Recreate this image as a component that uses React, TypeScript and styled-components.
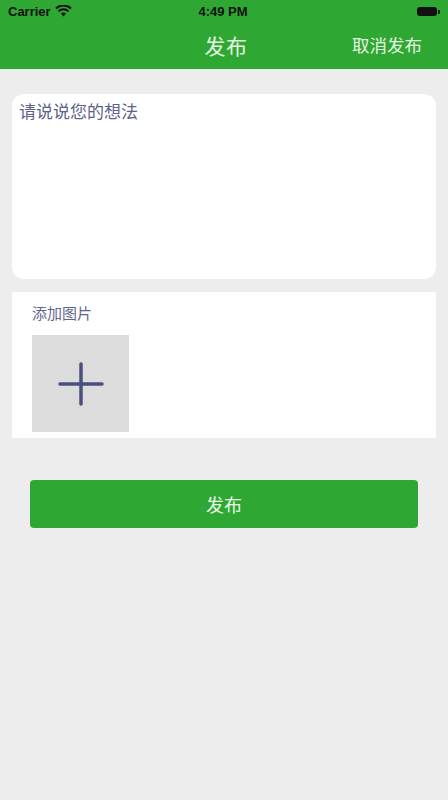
import * as React from 'react'
import styled, { createGlobalStyle } from 'styled-components'

const GREEN = '#2fa733'

const GlobalStyle = createGlobalStyle`
  html, body {
    margin: 0;
    padding: 0;
    background: #ededed;
    font-family: 'Noto Sans CJK SC', 'Liberation Sans', sans-serif;
  }
`

const Page = styled.div`
  width: 448px;
  min-height: 800px;
  background: #ededed;
  display: flex;
  flex-direction: column;
`

const Header = styled.header`
  background: ${GREEN};
  height: 69px;
  display: flex;
  flex-direction: column;
`

const StatusBar = styled.div`
  height: 22px;
  display: grid;
  grid-template-columns: 1fr auto 1fr;
  align-items: center;
  padding: 0 10px 0 8px;
  font-family: 'Liberation Sans', sans-serif;
  font-weight: 700;
  font-size: 13px;
  color: #111;
`

const Carrier = styled.div`
  display: flex;
  align-items: center;
  gap: 4px;
`

const Battery = styled.div`
  justify-self: end;
  width: 20px;
  height: 9px;
  border-radius: 3px;
  background: #111;
  position: relative;
  margin-right: 1px;

  &::after {
    content: '';
    position: absolute;
    right: -3px;
    top: 3px;
    width: 2px;
    height: 4px;
    border-radius: 0 1px 1px 0;
    background: #111;
  }
`

const NavBar = styled.div`
  flex: 1;
  display: grid;
  grid-template-columns: 1fr auto 1fr;
  align-items: center;
  padding-bottom: 2px;
  color: #e6f5e2;
`

const NavTitle = styled.div`
  font-size: 21px;
  letter-spacing: 0.5px;
  padding-left: 4px;
`

const NavAction = styled.div`
  justify-self: end;
  margin-right: 26px;
  font-size: 17.5px;
`

const Content = styled.main`
  display: flex;
  flex-direction: column;
  padding: 25px 12px 0;
`

const TextCard = styled.div`
  height: 185px;
  background: #fff;
  border-radius: 12px;
  padding: 6px 7px;
  box-sizing: border-box;
`

const Placeholder = styled.div`
  font-size: 17px;
  color: #5d618b;
  line-height: 22px;
`

const ImageCard = styled.div`
  margin-top: 13px;
  height: 146px;
  background: #fff;
  padding: 10px 20px 0;
  box-sizing: border-box;
  display: flex;
  flex-direction: column;
  gap: 11px;
`

const ImageLabel = styled.div`
  font-size: 15px;
  color: #62668e;
  line-height: 22px;
`

const AddTile = styled.button`
  width: 97px;
  height: 97px;
  border: none;
  padding: 0;
  background: #dcdcdc;
  display: flex;
  align-items: center;
  justify-content: center;
`

const SubmitButton = styled.button`
  margin: 42px 30px 0;
  height: 48px;
  border: none;
  border-radius: 4px;
  background: ${GREEN};
  color: #e9f7e6;
  font-family: 'Noto Sans CJK SC', sans-serif;
  font-size: 18px;
`

const Wifi = () => (
  <svg width="17" height="12" viewBox="0 0 17 12">
    <path d="M8.5 11.5 L6 8.6 A4 4 0 0 1 11 8.6 Z" fill="#111" />
    <path d="M3.6 6.2 A7 7 0 0 1 13.4 6.2" stroke="#111" strokeWidth="2" fill="none" />
    <path d="M1 3.4 A11 11 0 0 1 16 3.4" stroke="#111" strokeWidth="2" fill="none" />
  </svg>
)

const Plus = () => (
  <svg width="46" height="46" viewBox="0 0 46 46">
    <path d="M23 3 V43 M2 23 H44" stroke="#4a4f80" strokeWidth="3.5" strokeLinecap="round" />
  </svg>
)

export default function App() {
  return (
    <Page>
      <GlobalStyle />
      <Header>
        <StatusBar>
          <Carrier>
            Carrier <Wifi />
          </Carrier>
          <span>4:49 PM</span>
          <Battery />
        </StatusBar>
        <NavBar>
          <span />
          <NavTitle>发布</NavTitle>
          <NavAction>取消发布</NavAction>
        </NavBar>
      </Header>
      <Content>
        <TextCard>
          <Placeholder>请说说您的想法</Placeholder>
        </TextCard>
        <ImageCard>
          <ImageLabel>添加图片</ImageLabel>
          <AddTile>
            <Plus />
          </AddTile>
        </ImageCard>
      </Content>
      <SubmitButton>发布</SubmitButton>
    </Page>
  )
}
